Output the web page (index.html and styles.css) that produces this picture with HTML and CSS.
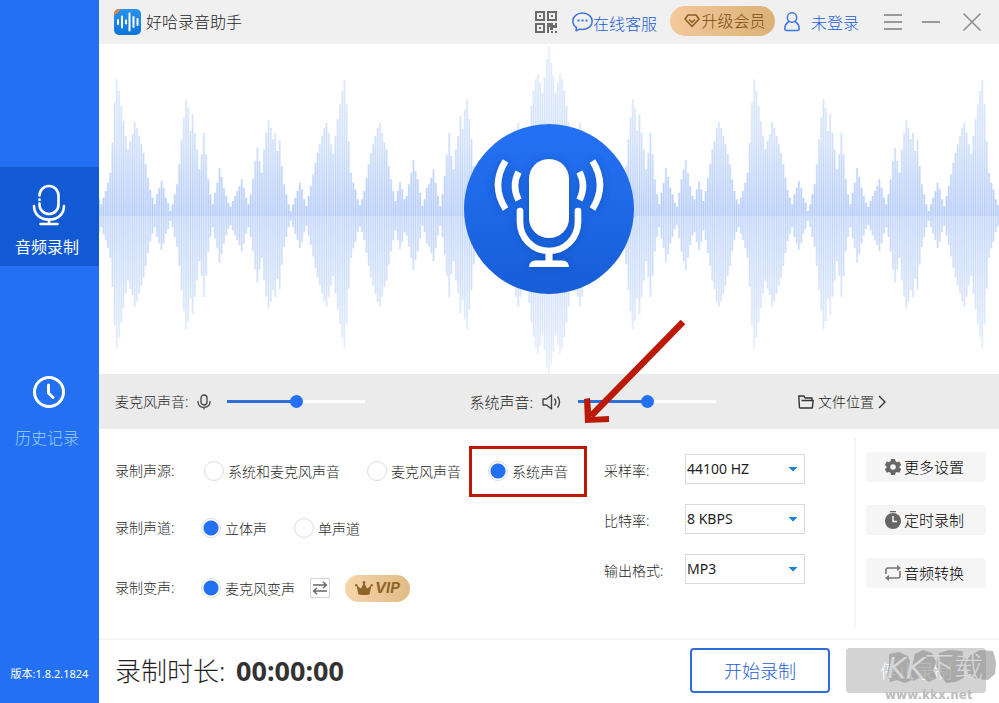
FILE: index.html
```
<!DOCTYPE html>
<html lang="zh-CN">
<head>
<meta charset="utf-8">
<meta name="viewport" content="width=device-width, initial-scale=1">
<title>好哈录音助手</title>
<link rel="stylesheet" href="styles.css">
</head>
<body>
<div class="app">
  <nav class="sidebar">
    <a class="nav-item active" href="#record">
      <svg width="34" height="42" viewBox="0 0 34 42" fill="none" stroke="#fff" stroke-width="2.600" stroke-linecap="round">
        <path d="M7.500 11.500a9.500 9.500 0 0 1 19 0v9a9.500 9.500 0 0 1-19 0v-1M7.500 15.500v.5"/>
        <path d="M2 22c0 8.500 6.500 13.500 15 13.500S32 30.500 32 22M17 36v4M8.500 40h17"/>
      </svg>
      <span>音频录制</span>
    </a>
    <a class="nav-item" href="#history">
      <svg width="34" height="34" viewBox="0 0 34 34" fill="none" stroke="#fff" stroke-width="3" stroke-linecap="round" stroke-linejoin="round">
        <circle cx="17" cy="17" r="14.500"/><path d="M16.500 10v8l4.500 4.500"/>
      </svg>
      <span>历史记录</span>
    </a>
    <p class="version">版本:1.8.2.1824</p>
  </nav>

  <div class="main">
    <header class="topbar">
      <svg class="logo" width="27" height="26" viewBox="0 0 27 26">
        <defs>
          <linearGradient id="logoFill" x1="0" y1="0" x2="0" y2="1"><stop offset="0" stop-color="#2a93ee"/><stop offset="1" stop-color="#0c74da"/></linearGradient>
          <clipPath id="logoClip"><rect width="27" height="26" rx="5"/></clipPath>
        </defs>
        <g clip-path="url(#logoClip)"><rect width="27" height="26" fill="url(#logoFill)"/><path d="M0 0h7L0 7z" fill="#f0803c"/></g>
        <path d="M4 11v4M8 7.500v11M12 11.500v3M15.500 4.500v17M19.500 8v10M23.500 10v6" stroke="#fff" stroke-width="2" stroke-linecap="round"/>
      </svg>
      <h1>好哈录音助手</h1>
      <div class="top-actions">
        <button class="icon-btn qr" aria-label="二维码">
          <svg width="22" height="22" viewBox="0 0 22 22" fill="none" stroke="#6b6b6b" stroke-width="2">
            <rect x="1" y="1" width="8" height="8"/><rect x="13" y="1" width="8" height="8"/><rect x="1" y="13" width="8" height="8"/>
            <g fill="#6b6b6b" stroke="none"><path d="M4 4h2v2H4zM16 4h2v2h-2zM4 16h2v2H4zM12 12h6v2h2v-2h2v5h-4v2h-3v-3h-1v6h-2zM16 20h2v2h-2zM20 20h2v2h-2z"/></g>
          </svg>
        </button>
        <a class="link service" href="#service">
          <svg width="21" height="20" viewBox="0 0 21 20" fill="none" stroke="#3a74dc" stroke-width="1.500">
            <path d="M4 18.800 4.500 15.500C2 14 .8 11.800 .8 9.300.8 4.500 5 1 10.500 1S20.200 4.500 20.200 9.300s-4.200 8.200-9.700 8.200c-1 0-2-.1-2.800-.4z" stroke-linejoin="round"/>
            <path d="M5.500 8.500h2M9.500 8.500h2M13.500 8.500h2" stroke-width="2"/>
          </svg>
          <span>在线客服</span>
        </a>
        <button class="upgrade">
          <svg width="16" height="14" viewBox="0 0 16 14" fill="none" stroke="#8a5a20" stroke-width="1.500" stroke-linejoin="round"><path d="M4 1h8l3 4-7 7.500L1 5z"/><path d="m5 5.500 3 3 3-3"/></svg>
          <span>升级会员</span>
        </button>
        <a class="link login" href="#login">
          <svg width="16" height="20" viewBox="0 0 16 20" fill="none" stroke="#3a74dc" stroke-width="1.500"><circle cx="8" cy="5.500" r="4.700"/><path d="M5 9.500C2.500 11 .8 13.500.8 16.500q0 2 2 2h10.400q2 0 2-2c0-3-1.700-5.500-4.200-7"/></svg>
          <span>未登录</span>
        </a>
        <button class="icon-btn menu" aria-label="菜单"><svg width="18" height="18" viewBox="0 0 18 18" stroke="#999" stroke-width="2"><path d="M0 2h18M0 9h18M0 16h18"/></svg></button>
        <button class="icon-btn min" aria-label="最小化"><svg width="18" height="18" viewBox="0 0 18 18" stroke="#999" stroke-width="2"><path d="M0 9h18"/></svg></button>
        <button class="icon-btn close" aria-label="关闭"><svg width="18" height="18" viewBox="0 0 18 18" stroke="#8c8c8c" stroke-width="1.500"><path d="M.5.5l17 17M17.500.5l-17 17"/></svg></button>
      </div>
    </header>

    <section class="hero">
      <svg class="wave" viewBox="0 0 900 330" preserveAspectRatio="xMidYMid slice" aria-hidden="true">
        <defs>
          <linearGradient id="waveFade" gradientUnits="userSpaceOnUse" x1="0" y1="0" x2="0" y2="330">
            <stop offset="0" stop-color="#6f9ff0" stop-opacity=".1"/><stop offset=".3" stop-color="#6f9ff0" stop-opacity=".18"/>
            <stop offset=".52" stop-color="#6f9bf5" stop-opacity=".32"/><stop offset=".521" stop-color="#6f9bf5" stop-opacity=".24"/>
            <stop offset=".75" stop-color="#6f9ff0" stop-opacity=".16"/><stop offset="1" stop-color="#6f9ff0" stop-opacity=".08"/>
          </linearGradient>
        </defs>
        <path id="waveSoft" fill="none" stroke="url(#waveFade)" stroke-width="2.250"/>
        <path id="waveCore" fill="none" stroke="url(#waveFade)" stroke-width="1"/>
      </svg>
      <svg class="disc" width="170" height="170" viewBox="0 0 170 170">
        <defs>
          <linearGradient id="discFill" x1="0" y1="0" x2="0" y2="1"><stop offset="0" stop-color="#2472f4"/><stop offset="1" stop-color="#175ed8"/></linearGradient>
          <filter id="micShadow" x="-20%" y="-20%" width="140%" height="140%"><feDropShadow dx="0" dy="1" stdDeviation="4" flood-color="#0b429f" flood-opacity=".45"/></filter>
        </defs>
        <circle cx="85" cy="85" r="85" fill="url(#discFill)"/>
        <g filter="url(#micShadow)">
          <rect x="65" y="35" width="40" height="79" rx="20" fill="#fff"/>
          <path d="M56 87v11a29 29 0 0 0 58 0V87" fill="none" stroke="#fff" stroke-width="6.500" stroke-linecap="round"/>
          <path d="M81.500 126h7v10.500h10q6 0 6.500 6.500H65q.5-6.500 6.500-6.500h10z" fill="#fff"/>
          <path d="M41.500 37q-15 24 0 48M54.500 48q-7 14 0 28M128.500 37q15 24 0 48M115.500 48q7 14 0 28" fill="none" stroke="#fff" stroke-width="6.500"/>
        </g>
      </svg>
    </section>

    <section class="volume">
      <div class="vol mic">
        <label for="mic-vol">麦克风声音:</label>
        <svg width="14" height="16" viewBox="0 0 14 16" fill="none" stroke="#444" stroke-width="1.300" stroke-linecap="round"><rect x="4" y="1" width="6" height="10" rx="3"/><path d="M1 7.500c0 4 2.500 5.800 6 5.800s6-1.800 6-5.800M7 13.500V15"/></svg>
        <input id="mic-vol" type="range" min="0" max="100" value="50">
      </div>
      <div class="vol sys">
        <label for="sys-vol">系统声音:</label>
        <svg width="19" height="16" viewBox="0 0 19 16" fill="none" stroke="#444" stroke-width="1.400"><path d="M1 5h3.500L9.500 1v14l-5-4H1z" stroke-linejoin="round"/><path d="M12.500 4.500q2.500 3.500 0 7M15.500 2.500q4 5.500 0 11"/></svg>
        <input id="sys-vol" type="range" min="0" max="100" value="50">
      </div>
      <a class="folder" href="#folder">
        <svg width="16" height="14" viewBox="0 0 16 14" fill="none" stroke="#333" stroke-width="1.400" stroke-linejoin="round"><path d="M1.500 13 .8 1h5l1.500 2H14v2.500M1.500 13h12.800l.9-7.500H3.500"/></svg>
        <span>文件位置</span>
        <svg width="8" height="14" viewBox="0 0 8 14" fill="none" stroke="#333" stroke-width="1.400"><path d="m1 1 6 6-6 6"/></svg>
      </a>
    </section>

    <section class="settings">
      <div class="sources">
        <fieldset class="row source">
          <legend>录制声源:</legend>
          <label class="radio both"><input type="radio" name="source"><span>系统和麦克风声音</span></label>
          <label class="radio mic-only"><input type="radio" name="source"><span>麦克风声音</span></label>
          <label class="radio marked"><input type="radio" name="source" checked><span>系统声音</span>
            <svg class="arrow" width="104" height="106" viewBox="0 0 104 106" aria-hidden="true"><path d="M99 3 7 97" stroke="#bc1a08" stroke-width="6.500"/><path d="m0 80 6-1 1.500 19 17.500-1v6L1 104z" fill="#bc1a08"/></svg>
          </label>
        </fieldset>
        <fieldset class="row channel">
          <legend>录制声道:</legend>
          <label class="radio"><input type="radio" name="channel" checked><span>立体声</span></label>
          <label class="radio mono"><input type="radio" name="channel"><span>单声道</span></label>
        </fieldset>
        <fieldset class="row voice">
          <legend>录制变声:</legend>
          <label class="radio"><input type="radio" name="voice" checked><span>麦克风变声</span></label>
          <button class="swap" aria-label="切换"><svg width="16" height="14" viewBox="0 0 16 14" fill="none" stroke="#666" stroke-width="1.300"><path d="M1 4h13.500M11 .8 14.500 4 11 7.200M15 10H1.500M5 6.800 1.500 10 5 13.200"/></svg></button>
          <span class="vip"><svg width="18" height="14" viewBox="0 0 18 14" fill="#8f6427"><path d="M3.500 13.500 1.500 4.500l4.500 3L9 1.500l3 6 4.500-3-2 9q-5.500 1-11 0z"/><circle cx="1.300" cy="4.300" r="1.200"/><circle cx="9" cy="1.500" r="1.400"/><circle cx="16.700" cy="4.300" r="1.200"/></svg><b>VIP</b></span>
        </fieldset>
      </div>
      <div class="formats">
        <label for="rate">采样率:</label><select id="rate"><option>44100 HZ</option></select>
        <label for="bits">比特率:</label><select id="bits"><option>8 KBPS</option></select>
        <label for="format">输出格式:</label><select id="format"><option>MP3</option></select>
      </div>
      <div class="tools">
        <button><svg width="16" height="16" viewBox="0 0 16 16"><path fill="#666" fill-rule="evenodd" d="M6 0h4l.5 2.300 1.500.9 2.200-.8 2 3.500L14.500 7.400v1.400l1.700 1.500-2 3.400-2.200-.7-1.500.8L10 16H6l-.5-2.200-1.500-.8-2.200.7-2-3.400 1.700-1.500V7.400L-.2 5.900l2-3.500 2.200.8 1.500-.9zM8 5.200a2.800 2.800 0 1 0 0 5.600 2.800 2.800 0 0 0 0-5.600z"/></svg><span>更多设置</span></button>
        <button><svg width="16" height="18" viewBox="0 0 16 18"><path d="M5 0h6v1.300H5z" fill="#666"/><circle cx="8" cy="10" r="8" fill="#666"/><path d="M8 5v5.500h4" fill="none" stroke="#f5f5f5" stroke-width="1.500"/></svg><span>定时录制</span></button>
        <button><svg width="16" height="16" viewBox="0 0 16 16" fill="none" stroke="#777" stroke-width="1.600"><path d="M1 9V5q0-2 2-2h11M15 6v5q0 2-2 2H2"/><path d="m12 0 4 3-4 3zM4 10l-4 3 4 3z" fill="#777" stroke="none"/></svg><span>音频转换</span></button>
      </div>
    </section>

    <footer class="footer">
      <p class="elapsed">录制时长: <b>00:00:00</b></p>
      <button class="start">开始录制</button>
      <button class="stop" disabled>停止录制</button>
      <div class="watermark">
        <svg width="114" height="36" viewBox="0 0 114 36" fill="#8d8d8d" fill-opacity=".6" aria-hidden="true"><path d="M4 5 14 3l9 4 4 9-2 8 2 7-7 3-8-3-7 2-3-7 2-10z"/><path d="m30 5 8-4 9 3 4 9-3 8 4 8-8 4-7-5-9 4-3-9z"/><path d="m54 4 10-3 13 1 4 9-3 9 2 8-9 5-10 1-6-9-4-8z"/><path d="m84 7 11-6 13 1 3 11-1 12-7 6-12-1-8-5-2-10z"/></svg>
        <span class="mark-name"><b>KK</b>下载</span>
        <span class="mark-url">www.kkx.net</span>
      </div>
    </footer>
  </div>
</div>
<script src="wave.js"></script>
</body>
</html>
```
FILE: styles.css
```
* { box-sizing: border-box; }

body {
  margin: 0;
  color: #1e1e1e;
  font-family: "Noto Sans", "Noto Sans CJK SC", sans-serif;
  font-size: 14px;
  font-weight: 300;
  line-height: 20px;
  background: #fff;
}

h1, p, fieldset, legend { margin: 0; padding: 0; }
fieldset { border: 0; min-width: 0; }
a { color: inherit; text-decoration: none; }
button, select { font: inherit; color: inherit; }
button { border: 0; padding: 0; background: none; }
b { font-weight: 700; }
svg { display: block; flex: none; }

.app { display: flex; min-height: 100vh; }

.sidebar {
  display: flex;
  flex: none;
  flex-direction: column;
  width: 99px;
  padding-top: 167px;
  background: #2470f2;
  color: #fff;
}
.nav-item {
  display: flex;
  flex-direction: column;
  align-items: center;
  height: 99px;
  padding: 17px 4px 0 2px;
  gap: 11px;
  font-size: 16px;
  font-weight: 400;
}
.nav-item span { padding-right: 3px; }
.nav-item.active { background: #125ad3; }
.nav-item + .nav-item { margin-top: 92px; gap: 19px; font-weight: 300; }
.nav-item + .nav-item span { color: #9fd0ff; }
.version { margin: auto 0 19px; font-size: 11px; font-weight: 400; text-align: center; }

.main { display: flex; flex: 1; flex-direction: column; min-width: 0; }

.topbar {
  display: flex;
  align-items: center;
  height: 44px;
  padding: 0 18px 0 15px;
  background: #f0f0f0;
}
.topbar h1 { margin-left: 5px; font-size: 16px; font-weight: 300; }
.top-actions { display: flex; align-items: center; margin-left: auto; font-size: 16px; }
.link { display: flex; align-items: center; color: #1c5cd8; }
.service { margin: 0 13px 0 15px; }
.service span { padding-top: 4px; }
.upgrade {
  display: flex;
  align-items: center;
  justify-content: center;
  gap: 1px;
  width: 105px;
  height: 30px;
  margin-bottom: 2px;
  border-radius: 15px;
  padding-left: 5px;
  background: linear-gradient(90deg, #f4c99c, #dbb177);
  color: #7a4a10;
}
.login { margin-left: 9px; gap: 11px; }
.login span { padding-top: 2px; }
.menu { margin-left: 25px; }
.min { margin-left: 20px; }
.close { margin-left: 23px; }

.hero {
  display: grid;
  flex: 1;
  min-height: 330px;
  place-items: center;
  overflow: hidden;
}
.hero > svg { grid-area: 1 / 1; }
.wave { width: 100%; height: 100%; }

.volume {
  display: flex;
  align-items: center;
  height: 55px;
  padding: 0 113px 0 16px;
  background: #ebebeb;
}
.vol { display: flex; align-items: center; gap: 9px; }
.mic { margin-right: 104px; }
.mic svg { margin-right: -1px; }
.sys { font-size: 15px; }
.folder { display: flex; align-items: center; gap: 4px; margin-left: auto; }

input[type="range"] {
  width: 138px;
  height: 14px;
  margin: 0 0 0 8px;
  appearance: none;
  background: linear-gradient(90deg, #2f6fdc 50%, #fff 50%) center / 100% 3px no-repeat;
}
input[type="range"]::-webkit-slider-thumb {
  width: 13px;
  height: 13px;
  border-radius: 50%;
  appearance: none;
  background: #2470f2;
}

.settings { display: flex; height: 211px; border-bottom: 2px solid #f5f5f5; padding-right: 13px; }
.sources { flex: 1; min-width: 0; padding: 24px 0 0 16px; }
.row { display: flex; align-items: center; height: 36px; }
.row legend { float: left; width: 86px; }
.channel { margin-top: 21px; }
.voice { margin-top: 24px; }
.radio { display: flex; align-items: center; gap: 4px; white-space: nowrap; }
.radio span { padding-top: 2px; }
.radio input {
  flex: none;
  width: 20px;
  height: 20px;
  margin: 0;
  border: 1px solid #dcdcdc;
  border-radius: 50%;
  appearance: none;
  background: #fff;
}
.radio input:checked { background: radial-gradient(circle, #2470f2 7px, #fff 8px); }
.both { margin-left: 3px; }
.mic-only { margin-left: 27px; }
.mono { margin-left: 27px; }
.marked { position: relative; margin-left: 27px; }
.marked::after {
  content: "";
  position: absolute;
  inset: -14px -19px -15px -19px;
  border: 3px solid #bc1a08;
}
.arrow { position: absolute; left: 96px; bottom: 57px; pointer-events: none; }
.swap { display: grid; width: 20px; height: 20px; margin-left: 15px; border: 1px solid #d5d5d5; place-items: center; }
.vip {
  display: flex;
  align-items: center;
  justify-content: center;
  gap: 2px;
  width: 65px;
  height: 27px;
  margin-left: 15px;
  border-radius: 14px;
  background: linear-gradient(90deg, #f7d5ab, #e0bb86);
  color: #8f6427;
  font-family: Inter, sans-serif;
  font-size: 15px;
  font-style: italic;
}

.formats {
  display: grid;
  grid-template-columns: 81px 120px;
  grid-auto-rows: 30px;
  row-gap: 20px;
  align-content: start;
  align-items: center;
  padding-top: 25px;
  margin-right: 49px;
}
.formats label { padding-top: 3px; }
.formats select {
  height: 30px;
  border: 1px solid #d9d9d9;
  border-radius: 0;
  padding: 0 1px;
  appearance: none;
  color: #1e1e1e;
  font-weight: 400;
  background: conic-gradient(from -45deg at 50% 100%, #1f86dc 90deg, transparent 0) right 7px center / 8px 4px no-repeat #fff;
}

.tools {
  display: flex;
  flex-direction: column;
  gap: 23px;
  height: 190px;
  margin-top: 9px;
  border-left: 2px solid #f5f5f5;
  padding: 14px 0 0 10px;
}
.tools button {
  display: flex;
  align-items: center;
  justify-content: center;
  gap: 3px;
  width: 120px;
  height: 30px;
  border-radius: 4px;
  padding-right: 3px;
  background: #f5f5f5;
  color: #000;
  font-size: 15px;
}

.footer { position: relative; display: flex; align-items: center; height: 63px; padding: 0 13px 2px 16px; }
.elapsed { flex: 1; font-size: 26px; line-height: 36px; }
.elapsed b { margin-left: 4px; color: #333; font-size: 27px; }
.footer button { width: 140px; height: 45px; border-radius: 4px; font-size: 18px; }
.footer .start { margin-right: 16px; border: 2px solid #2f6fdc; color: #1c5cd8; }
.footer .stop { background: #d3d3d3; color: #fff; }
.watermark { position: absolute; right: 0; bottom: -2px; width: 114px; pointer-events: none; }
.mark-name {
  position: absolute;
  top: 0;
  left: 2px;
  color: #d6d6d6;
  font-size: 29px;
  line-height: 36px;
  white-space: nowrap;
}
.mark-name b { font-family: "DejaVu Sans", sans-serif; font-style: italic; font-weight: 400; }
.mark-url { display: block; color: #bdbdbd; font-family: "DejaVu Sans", sans-serif; font-size: 12px; font-weight: 700; line-height: 20px; }
```
FILE: wave.js
```
const left = [50,35,55,75,100,130,220,340,410,375,330,285,240,200,225,245,282,265,240,215,190,155,115,78,55,35,65,85,105,85,55,40,15,35,65,95,155,230,295,350,325,255,305,250,200,140,185,250,185,110,65,35,70,100,145,118,85,60,40,28,45,60,75,90,110,85,55,35,65,110,165,205,165,130,200,250,287,265,230,250,195,228,150,95,65,35,15,35,55,75,100,80,50,30,60,90,125,160,190,215,240,265,280,250,215,185,240,290,335,375,408,335,225,130,100,80,50,33];
const leftMiddle = [50,75,115,155,190,215,240,265,280,250,220,200,150,110,75,45,75,102,80,50,60,95,130,168,135,110,70,30,50,85,95,115,140,100,60,30,65,120,185,250,180,140,200,240,300,260,320,350,290,230,150,100];
const centre = [250,280,250,180,120,170,270,330,375,410,425,400,370,415,470,510,460,420,370,400,425,410,375,330,280,170,120,180,250,280,250];
const rightMiddle = [100,150,230,295,350,325,255,305,250,200,140,190,250,185,110,65,35,70,100,145,118,85,65,40,28,70,110,140,168,130,90,60,50,80,105,80,45,75,115,155,200,225,265,282,265,240,215,185,155,110,75,50,35,55];

// Each section: heights, first bar and last bar position in the 900-unit drawing.
const sections = [
  [left, 0, 261],
  [leftMiddle, 263, 377],
  [centre, 417, 483],
  [rightMiddle, 525, 642],
  [left.slice(3), 644, 899]
];
let d = "";
for (const [heights, from, to] of sections) {
  const step = (to - from) / (heights.length - 1);
  heights.forEach((h, i) => {
    const x = (from + i * step).toFixed(1);
    d += `M${x} ${(172 - h / 3).toFixed(1)}V${(172 + h * 0.323).toFixed(1)}`;
  });
}
document.getElementById("waveSoft").setAttribute("d", d);
document.getElementById("waveCore").setAttribute("d", d);
```
